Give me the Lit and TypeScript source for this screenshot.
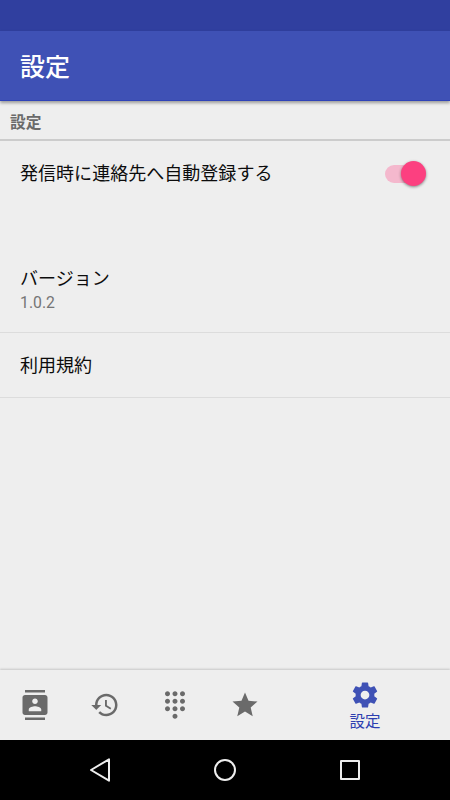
import { LitElement, html, css, svg } from "lit";
import { customElement, property } from "lit/decorators.js";

const icons: Record<string, string> = {
  contacts:
    "M20 0H4v2h16V0zM4 24h16v-2H4v2zM20 4H4c-1.1 0-2 .9-2 2v12c0 1.1.9 2 2 2h16c1.1 0 2-.9 2-2V6c0-1.100-.9-2-2-2zm-8 2.750c1.240 0 2.250 1.010 2.250 2.250s-1.010 2.250-2.250 2.250S9.750 10.240 9.750 9 10.760 6.750 12 6.750zM17 17H7v-1.500c0-1.670 3.330-2.500 5-2.500s5 .83 5 2.500V17z",
  history:
    "M13 3c-4.970 0-9 4.030-9 9H1l3.890 3.890.07.14L9 12H6c0-3.870 3.130-7 7-7s7 3.130 7 7-3.130 7-7 7c-1.930 0-3.680-.79-4.940-2.060l-1.420 1.420C8.270 19.990 10.510 21 13 21c4.970 0 9-4.030 9-9s-4.030-9-9-9zm-1 5v5l4.280 2.540.72-1.210-3.500-2.080V8H12z",
  dialpad:
    "M12 19c-1.100 0-2 .9-2 2s.9 2 2 2 2-.9 2-2-.9-2-2-2zM6 1c-1.100 0-2 .9-2 2s.9 2 2 2 2-.9 2-2-.9-2-2-2zm0 6c-1.100 0-2 .9-2 2s.9 2 2 2 2-.9 2-2-.9-2-2-2zm0 6c-1.100 0-2 .9-2 2s.9 2 2 2 2-.9 2-2-.9-2-2-2zm12-8c1.100 0 2-.9 2-2s-.9-2-2-2-2 .9-2 2 .9 2 2 2zm-6 8c-1.100 0-2 .9-2 2s.9 2 2 2 2-.9 2-2-.9-2-2-2zm6 0c-1.100 0-2 .9-2 2s.9 2 2 2 2-.9 2-2-.9-2-2-2zm0-6c-1.100 0-2 .9-2 2s.9 2 2 2 2-.9 2-2-.9-2-2-2zm-6 0c-1.100 0-2 .9-2 2s.9 2 2 2 2-.9 2-2-.9-2-2-2zm0-6c-1.100 0-2 .9-2 2s.9 2 2 2 2-.9 2-2-.9-2-2-2z",
  star: "M12 17.270L18.180 21l-1.640-7.030L22 9.240l-7.190-.61L12 2 9.190 8.630 2 9.240l5.460 4.730L5.820 21z",
  settings:
    "M19.430 12.980c.04-.32.07-.64.07-.98s-.03-.66-.07-.98l2.110-1.650c.19-.15.24-.42.12-.64l-2-3.460c-.12-.22-.39-.3-.61-.22l-2.490 1c-.52-.4-1.080-.73-1.690-.98l-.38-2.650C14.460 2.180 14.250 2 14 2h-4c-.25 0-.46.18-.49.42l-.38 2.650c-.61.25-1.170.59-1.690.98l-2.490-1c-.23-.09-.49 0-.61.22l-2 3.460c-.13.22-.07.49.12.64l2.110 1.650c-.04.32-.07.65-.07.98s.03.66.07.98l-2.110 1.650c-.19.15-.24.42-.12.64l2 3.460c.12.22.39.3.61.22l2.490-1c.52.4 1.080.73 1.690.98l.38 2.650c.03.24.24.42.49.42h4c.25 0 .46-.18.49-.42l.38-2.650c.61-.25 1.170-.59 1.690-.98l2.490 1c.23.09.49 0 .61-.22l2-3.460c.12-.22.07-.49-.12-.64l-2.110-1.650zM12 15.500c-1.930 0-3.500-1.570-3.500-3.500s1.570-3.500 3.500-3.500 3.500 1.570 3.500 3.500-1.570 3.500-3.500 3.500z",
};

@customElement("nav-tab")
export class NavTab extends LitElement {
  @property() icon = "";
  @property() label = "";

  static styles = css`
    :host {
      display: flex;
      flex-direction: column;
      align-items: center;
      justify-content: center;
      color: #6a6a6a;
    }
    svg {
      display: block;
      width: 30px;
      height: 30px;
      fill: currentColor;
    }
    :host([active]) {
      color: #3f51b5;
      padding-top: 2px;
    }
    .label {
      font-size: 15.5px;
      line-height: 20px;
      margin-top: 2px;
      color: #2c3eb0;
    }
  `;

  render() {
    return html`
      <svg viewBox="0 0 24 24">${svg`<path d=${icons[this.icon]}></path>`}</svg>
      ${this.label ? html`<span class="label">${this.label}</span>` : null}
    `;
  }
}

@customElement("app-root")
export class AppRoot extends LitElement {
  static styles = css`
    :host {
      display: flex;
      flex-direction: column;
      height: 800px;
      overflow: hidden;
      background: #eee;
      color: #0c0c0c;
      font-family: Roboto, "Noto Sans CJK JP", sans-serif;
    }
    .status {
      height: 31px;
      background: #303f9f;
    }
    .bar {
      height: 70px;
      box-sizing: border-box;
      padding: 0 0 2px 20px;
      display: flex;
      align-items: center;
      background: #3f51b5;
      border-bottom: 1px solid #2f43b8;
      color: #fff;
      font-size: 25px;
      font-weight: 500;
      box-shadow: 0 2px 3px rgba(0, 0, 0, 0.35);
      z-index: 1;
    }
    .section {
      height: 40px;
      box-sizing: border-box;
      padding: 2px 0 0 10px;
      display: flex;
      align-items: center;
      border-bottom: 2px solid #ccc;
      color: #6a6a6a;
      font-size: 15.7px;
      font-weight: 700;
    }
    .row {
      box-sizing: border-box;
      padding: 0 24px 0 20px;
      display: flex;
      align-items: center;
      justify-content: space-between;
      font-size: 18.05px;
      line-height: 26px;
    }
    .auto {
      height: 65px;
    }
    .version {
      height: 87px;
      margin-top: 40px;
      padding-top: 2px;
      flex-direction: column;
      align-items: flex-start;
      justify-content: center;
      border-bottom: 1px solid #dcdcdc;
    }
    .value {
      color: #757575;
      font-size: 15.8px;
      line-height: 22px;
    }
    .terms {
      height: 65px;
      padding-top: 1px;
      border-bottom: 1px solid #dcdcdc;
    }
    .track {
      width: 41px;
      height: 18px;
      border-radius: 9px;
      background: linear-gradient(#f4b8cd, #f4b8cd) 0 0 / 32px 18px no-repeat;
      display: flex;
      align-items: center;
      justify-content: flex-end;
    }
    .thumb {
      width: 25px;
      height: 25px;
      border-radius: 50%;
      background: #fc4080;
      box-shadow: 0 1px 3px rgba(0, 0, 0, 0.45);
    }
    .space {
      flex: 1;
    }
    .tabs {
      height: 70px;
      display: flex;
      padding-right: 15px;
      box-shadow: 0 -1px 2px rgba(0, 0, 0, 0.17);
    }
    nav-tab {
      width: 70px;
    }
    nav-tab[active] {
      width: 140px;
      margin-left: 15px;
    }
    .system {
      height: 60px;
      display: flex;
      align-items: center;
      justify-content: center;
      background: #000;
      z-index: 1;
    }
    .system svg {
      width: 125px;
      height: 60px;
      fill: none;
      stroke: #eee;
      stroke-width: 2;
      stroke-linejoin: round;
    }
  `;

  render() {
    return html`
      <div class="status"></div>
      <header class="bar">設定</header>
      <div class="section">設定</div>
      <div class="row auto">
        <span>発信時に連絡先へ自動登録する</span>
        <div class="track"><div class="thumb"></div></div>
      </div>
      <div class="row version">
        <span>バージョン</span>
        <span class="value">1.0.2</span>
      </div>
      <div class="row terms">利用規約</div>
      <div class="space"></div>
      <nav class="tabs">
        <nav-tab icon="contacts"></nav-tab>
        <nav-tab icon="history"></nav-tab>
        <nav-tab icon="dialpad"></nav-tab>
        <nav-tab icon="star"></nav-tab>
        <nav-tab icon="settings" label="設定" active></nav-tab>
      </nav>
      <div class="system">
        <svg viewBox="0 0 125 60"><path d="M53 30L71 19.300V40.700z"></path></svg>
        <svg viewBox="0 0 125 60"><circle cx="62" cy="30" r="10"></circle></svg>
        <svg viewBox="0 0 125 60"><rect x="53" y="21" width="18" height="18"></rect></svg>
      </div>
    `;
  }
}
